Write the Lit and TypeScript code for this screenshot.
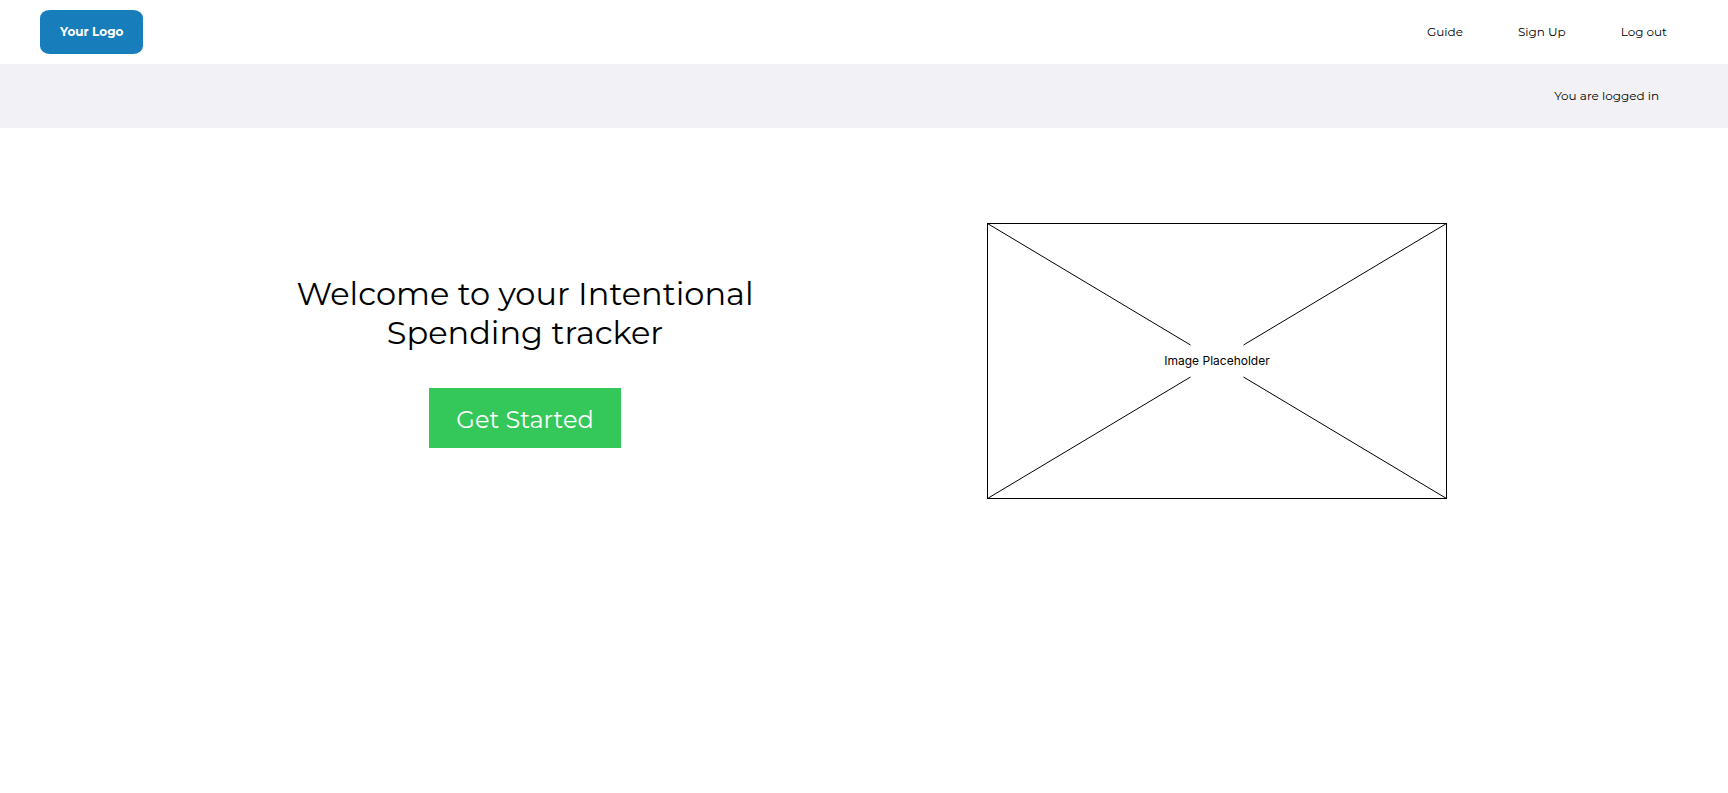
import { LitElement, html, css } from "lit";
import { customElement } from "lit/decorators.js";

@customElement("image-placeholder")
export class ImagePlaceholder extends LitElement {
  static styles = css`
    :host {
      display: block;
      width: 100%;
      max-width: 460px;
      font-family: "Inter", sans-serif;
    }
    .frame {
      display: grid;
      place-items: center;
    }
    .lines,
    .caption {
      grid-area: 1 / 1;
    }
    .lines {
      display: block;
      width: 100%;
    }
    .caption {
      font-size: 12px;
      line-height: 16px;
      color: #000;
    }
  `;

  render() {
    return html`
      <div class="frame">
        <svg class="lines" viewBox="0 0 460 276" fill="none" stroke="#000" stroke-width="1" aria-hidden="true">
          <rect x="0.5" y="0.5" width="459" height="275" />
          <path d="M0.5 0.5 203.5 122M459.5 0.5 256.5 122M0.5 275.5 203.5 154M459.5 275.5 256.5 154" />
        </svg>
        <span class="caption">Image Placeholder</span>
      </div>
    `;
  }
}

@customElement("app-root")
export class AppRoot extends LitElement {
  static styles = css`
    :host {
      display: block;
      min-height: 100vh;
      background: #fff;
      color: #000;
      font-family: "Montserrat", "Inter", sans-serif;
    }
    .header {
      display: flex;
      align-items: center;
      justify-content: space-between;
      height: 64px;
      padding: 0 61px 0 40px;
    }
    .logo {
      padding: 13px 20px;
      border-radius: 10px / 8px;
      background: #177ebb;
      color: #fff;
      font-size: 12px;
      font-weight: 700;
      line-height: 18px;
      text-decoration: none;
    }
    .nav {
      display: flex;
      gap: 55px;
    }
    .link {
      color: #000;
      font-size: 12px;
      line-height: 18px;
      text-decoration: none;
    }
    .status {
      display: flex;
      align-items: center;
      justify-content: flex-end;
      height: 64px;
      padding: 0 69px;
      background: #f2f1f6;
      color: #000;
      font-size: 12px;
      line-height: 18px;
    }
    .hero {
      display: grid;
      grid-template-columns: 1fr 1fr;
      align-items: center;
      justify-items: center;
      padding: 95px 165px 64px 179px;
    }
    .intro {
      display: flex;
      flex-direction: column;
      align-items: center;
      gap: 36px;
    }
    .title {
      max-width: 480px;
      margin: 0;
      font-size: 32px;
      font-weight: 400;
      line-height: 39px;
      text-align: center;
    }
    .start {
      padding: 17px 27px 13px;
      border: 0;
      background: #34c85a;
      color: #fff;
      font-family: inherit;
      font-size: 24px;
      font-weight: 400;
      line-height: 30px;
      cursor: pointer;
    }
  `;

  render() {
    return html`
      <header class="header">
        <a class="logo" href="#">Your Logo</a>
        <nav class="nav">
          <a class="link" href="#guide">Guide</a>
          <a class="link" href="#signup">Sign Up</a>
          <a class="link" href="#logout">Log out</a>
        </nav>
      </header>
      <div class="status" role="status">You are logged in</div>
      <main class="hero">
        <section class="intro">
          <h1 class="title">Welcome to your Intentional Spending tracker</h1>
          <button class="start" type="button">Get Started</button>
        </section>
        <image-placeholder></image-placeholder>
      </main>
    `;
  }
}
